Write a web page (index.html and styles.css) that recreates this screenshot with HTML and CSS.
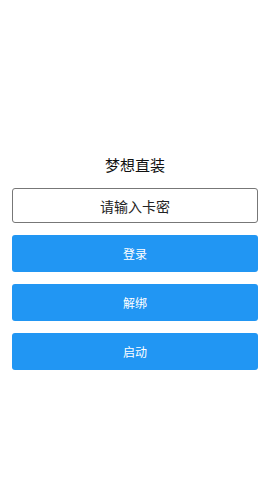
FILE: index.html
```html
<!DOCTYPE html>
<html lang="zh-CN">
  <head>
    <meta charset="UTF-8" />
    <meta name="viewport" content="width=device-width, initial-scale=1.0" />
    <title>梦想直装</title>
    <link rel="stylesheet" href="styles.css">
  </head>
  <body>
    <!-- 登录面板 -->
    <div class="panel">
      <h1 class="title">梦想直装</h1>
      <input class="card" type="text" placeholder="请输入卡密" />
      <button class="btn">登录</button>
      <button class="btn">解绑</button>
      <button class="btn">启动</button>
    </div>
  </body>
</html>
```

FILE: styles.css
```css
/* 样式初始化 */
* {
  margin: 0;
  padding: 0;
  box-sizing: border-box;
}

body {
  width: 270px;
  height: 480px;
  background-color: #fff;
  font-family: "Noto Sans CJK SC", "Noto Sans", sans-serif;
}

/* 面板居中 */
.panel {
  padding: 154px 12px 0;
  display: flex;
  flex-direction: column;
  gap: 12px;
}

.title {
  font-size: 15px;
  font-weight: normal;
  line-height: 22px;
  text-align: center;
  color: #111;
  margin-bottom: 0;
}

.card {
  height: 35px;
  border: 1px solid #777;
  border-radius: 3px;
  text-align: center;
  font-family: inherit;
  font-size: 14px;
  outline: none;
}
.card::placeholder {
  color: #222;
}

.btn {
  height: 37px;
  border: none;
  border-radius: 3px;
  background-color: #2196f3;
  color: #fff;
  font-family: inherit;
  font-size: 12px;
}
```
